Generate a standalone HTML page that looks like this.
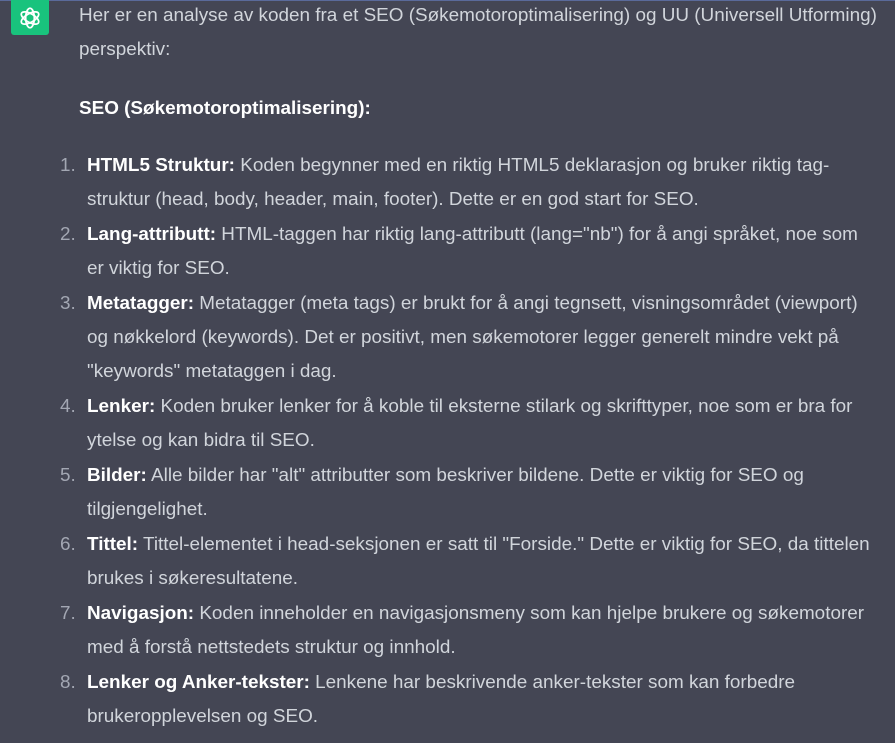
<!DOCTYPE html>
<html><head><meta charset="utf-8"><style>
html,body{margin:0;padding:0;background:#444654;width:895px;height:743px;overflow:hidden}
body{font-family:"Liberation Sans",sans-serif;font-size:18.9px;color:#d1d5db;position:relative}
.w{position:absolute;left:0;top:2px;width:895px;height:741px}
.top{position:absolute;left:0;top:0;width:895px;height:1px;background:#5a6a9a}
.icon{position:absolute;left:11px;top:0;width:38px;height:35px;background:#19c37d;border-radius:0 0 3px 3px;display:flex;align-items:center;justify-content:center}
.l{position:absolute;left:79px;white-space:nowrap;line-height:20px}
.n{position:absolute;left:60px;white-space:nowrap;line-height:20px;color:#a3a7b3}
.i{left:87px}
b{color:#fff}
</style></head><body>
<div class="top"></div>
<div class="icon"><svg width="26" height="26" viewBox="0 0 24 24" fill="none" stroke="#fff" stroke-width="1.6"><g><ellipse cx="12" cy="12" rx="4" ry="9"/><ellipse cx="12" cy="12" rx="4" ry="9" transform="rotate(60 12 12)"/><ellipse cx="12" cy="12" rx="4" ry="9" transform="rotate(120 12 12)"/></g></svg></div>
<div class="w">
<div class="l" style="top:4px">Her er en analyse av koden fra et SEO (Søkemotoroptimalisering) og UU (Universell Utforming)</div>
<div class="l" style="top:38px">perspektiv:</div>
<div class="l" style="top:97px"><b>SEO (Søkemotoroptimalisering):</b></div>

<div class="n" style="top:154px">1.</div>
<div class="l i" style="top:154px"><b>HTML5 Struktur:</b> Koden begynner med en riktig HTML5 deklarasjon og bruker riktig tag-</div>
<div class="l i" style="top:188px">struktur (head, body, header, main, footer). Dette er en god start for SEO.</div>
<div class="n" style="top:223px">2.</div>
<div class="l i" style="top:223px"><b>Lang-attributt:</b> HTML-taggen har riktig lang-attributt (lang="nb") for å angi språket, noe som</div>
<div class="l i" style="top:257px">er viktig for SEO.</div>
<div class="n" style="top:292px">3.</div>
<div class="l i" style="top:292px"><b>Metatagger:</b> Metatagger (meta tags) er brukt for å angi tegnsett, visningsområdet (viewport)</div>
<div class="l i" style="top:326px">og nøkkelord (keywords). Det er positivt, men søkemotorer legger generelt mindre vekt på</div>
<div class="l i" style="top:360px">"keywords" metataggen i dag.</div>
<div class="n" style="top:395px">4.</div>
<div class="l i" style="top:395px"><b>Lenker:</b> Koden bruker lenker for å koble til eksterne stilark og skrifttyper, noe som er bra for</div>
<div class="l i" style="top:429px">ytelse og kan bidra til SEO.</div>
<div class="n" style="top:464px">5.</div>
<div class="l i" style="top:464px"><b>Bilder:</b> Alle bilder har "alt" attributter som beskriver bildene. Dette er viktig for SEO og</div>
<div class="l i" style="top:498px">tilgjengelighet.</div>
<div class="n" style="top:533px">6.</div>
<div class="l i" style="top:533px"><b>Tittel:</b> Tittel-elementet i head-seksjonen er satt til "Forside." Dette er viktig for SEO, da tittelen</div>
<div class="l i" style="top:567px">brukes i søkeresultatene.</div>
<div class="n" style="top:602px">7.</div>
<div class="l i" style="top:602px"><b>Navigasjon:</b> Koden inneholder en navigasjonsmeny som kan hjelpe brukere og søkemotorer</div>
<div class="l i" style="top:636px">med å forstå nettstedets struktur og innhold.</div>
<div class="n" style="top:671px">8.</div>
<div class="l i" style="top:671px"><b>Lenker og Anker-tekster:</b> Lenkene har beskrivende anker-tekster som kan forbedre</div>
<div class="l i" style="top:705px">brukeropplevelsen og SEO.</div>
</div>
</body></html>
